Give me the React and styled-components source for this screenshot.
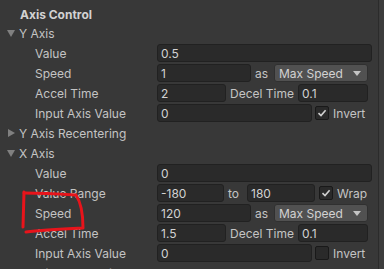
import React from "react";
import styled, { createGlobalStyle } from "styled-components";

const GlobalStyle = createGlobalStyle`
  html, body {
    margin: 0;
    padding: 0;
    background: #383838;
    overflow: hidden;
  }
  * {
    box-sizing: border-box;
  }
`;

const Page = styled.div`
  position: relative;
  width: 384px;
  height: 269px;
  display: flex;
  overflow: hidden;
  font-family: Inter, "Noto Sans", sans-serif;
  font-size: 12px;
  color: #c4c4c4;
`;

const Inspector = styled.div`
  flex: 1;
  padding-top: 6px;
  padding-right: 6px;
`;

const ScrollTrack = styled.div`
  width: 6px;
  border-left: 1px solid #2b2b2b;
  background: #3c3c3c;
`;

const Title = styled.div`
  height: 17px;
  display: flex;
  align-items: center;
  padding-left: 20px;
  font-weight: 700;
  color: #d2d2d2;
`;

const Row = styled.div`
  height: 20px;
  display: grid;
  grid-template-columns: 157px 1fr;
  align-items: center;
`;

const Label = styled.div`
  display: flex;
  align-items: center;
  padding-left: ${(p) => p.$indent}px;
  white-space: nowrap;
`;

const Arrow = styled.span`
  width: 0;
  height: 0;
  margin: 0 4px 0 7px;
  ${(p) =>
    p.$open
      ? `border-left: 4px solid transparent;
         border-right: 4px solid transparent;
         border-top: 7px solid #808080;`
      : `border-top: 4px solid transparent;
         border-bottom: 4px solid transparent;
         border-left: 7px solid #808080;
         margin-left: 8px;`}
`;

const Controls = styled.div`
  display: flex;
  align-items: center;
  height: 18px;
`;

const Field = styled.div`
  width: ${(p) => (p.$w ? `${p.$w}px` : "100%")};
  flex: ${(p) => (p.$w ? "none" : "1")};
  height: 18px;
  padding-left: 3px;
  display: flex;
  align-items: center;
  background: #2a2a2a;
  border: 1px solid #212121;
  border-radius: 3px;
  color: #d2d2d2;
`;

const Word = styled.span`
  width: ${(p) => p.$w}px;
  flex: none;
  padding-left: 4px;
  white-space: nowrap;
`;

const Dropdown = styled.div`
  width: 94px;
  height: 18px;
  display: flex;
  align-items: center;
  justify-content: space-between;
  padding: 0 6px 0 4px;
  background: #515151;
  border: 1px solid #303030;
  border-radius: 3px;
  color: #d2d2d2;
`;

const Caret = styled.span`
  width: 0;
  height: 0;
  border-left: 4px solid transparent;
  border-right: 4px solid transparent;
  border-top: 5px solid #c4c4c4;
`;

const Check = styled.div`
  width: 14px;
  height: 14px;
  margin-left: ${(p) => p.$ml}px;
  flex: none;
  display: flex;
  align-items: center;
  justify-content: center;
  background: #2a2a2a;
  border: 1px solid #191919;
  border-radius: 2px;
`;

const CheckLabel = styled.span`
  padding-left: 4px;
  white-space: nowrap;
`;

const Scribble = styled.svg`
  position: absolute;
  left: 0;
  top: 0;
  pointer-events: none;
`;

function Tick() {
  return (
    <svg width="10" height="10" viewBox="0 0 10 10">
      <path d="M1.5 5.2 L4 7.6 L8.6 2.2" fill="none" stroke="#d0d0d0" strokeWidth="1.6" />
    </svg>
  );
}

function Foldout({ open, children }) {
  return (
    <Row>
      <Label $indent={0}>
        <Arrow $open={open} />
        {children}
      </Label>
    </Row>
  );
}

function Prop({ label, children }) {
  return (
    <Row>
      <Label $indent={35}>{label}</Label>
      <Controls>{children}</Controls>
    </Row>
  );
}

function SpeedRow({ value }) {
  return (
    <Prop label="Speed">
      <Field $w={94}>{value}</Field>
      <Word $w={23}>as</Word>
      <Dropdown>
        Max Speed
        <Caret />
      </Dropdown>
    </Prop>
  );
}

function AccelRow({ accel, decel }) {
  return (
    <Prop label="Accel Time">
      <Field $w={69}>{accel}</Field>
      <Word $w={72}>Decel Time</Word>
      <Field $w={70}>{decel}</Field>
    </Prop>
  );
}

function InputRow({ checked }) {
  return (
    <Prop label="Input Axis Value">
      <Field $w={155}>0</Field>
      <Check $ml={3}>{checked && <Tick />}</Check>
      <CheckLabel>Invert</CheckLabel>
    </Prop>
  );
}

export default function App() {
  return (
    <>
      <GlobalStyle />
      <Page>
        <Inspector>
          <Title>Axis Control</Title>
          <Foldout open>Y Axis</Foldout>
          <Prop label="Value">
            <Field>0.5</Field>
          </Prop>
          <SpeedRow value="1" />
          <AccelRow accel="2" decel="0.1" />
          <InputRow checked />
          <Foldout>Y Axis Recentering</Foldout>
          <Foldout open>X Axis</Foldout>
          <Prop label="Value">
            <Field>0</Field>
          </Prop>
          <Prop label="Value Range">
            <Field $w={67}>-180</Field>
            <Word $w={23}>to</Word>
            <Field $w={68}>180</Field>
            <Check $ml={4}>
              <Tick />
            </Check>
            <CheckLabel>Wrap</CheckLabel>
          </Prop>
          <SpeedRow value="120" />
          <AccelRow accel="1.5" decel="0.1" />
          <InputRow />
          <Foldout>X Axis Recentering</Foldout>
        </Inspector>
        <ScrollTrack />
        <Scribble width="384" height="269">
          <path
            d="M24 193 C40 193 60 194 76 195 C80 201 83 210 83 228 C60 229 40 230 26 232"
            fill="none"
            stroke="#e8141b"
            strokeWidth="3"
            strokeLinecap="round"
            strokeLinejoin="round"
          />
          <path d="M24 192 L23 227" fill="none" stroke="#e8141b" strokeWidth="3" strokeLinecap="round" />
        </Scribble>
      </Page>
    </>
  );
}
